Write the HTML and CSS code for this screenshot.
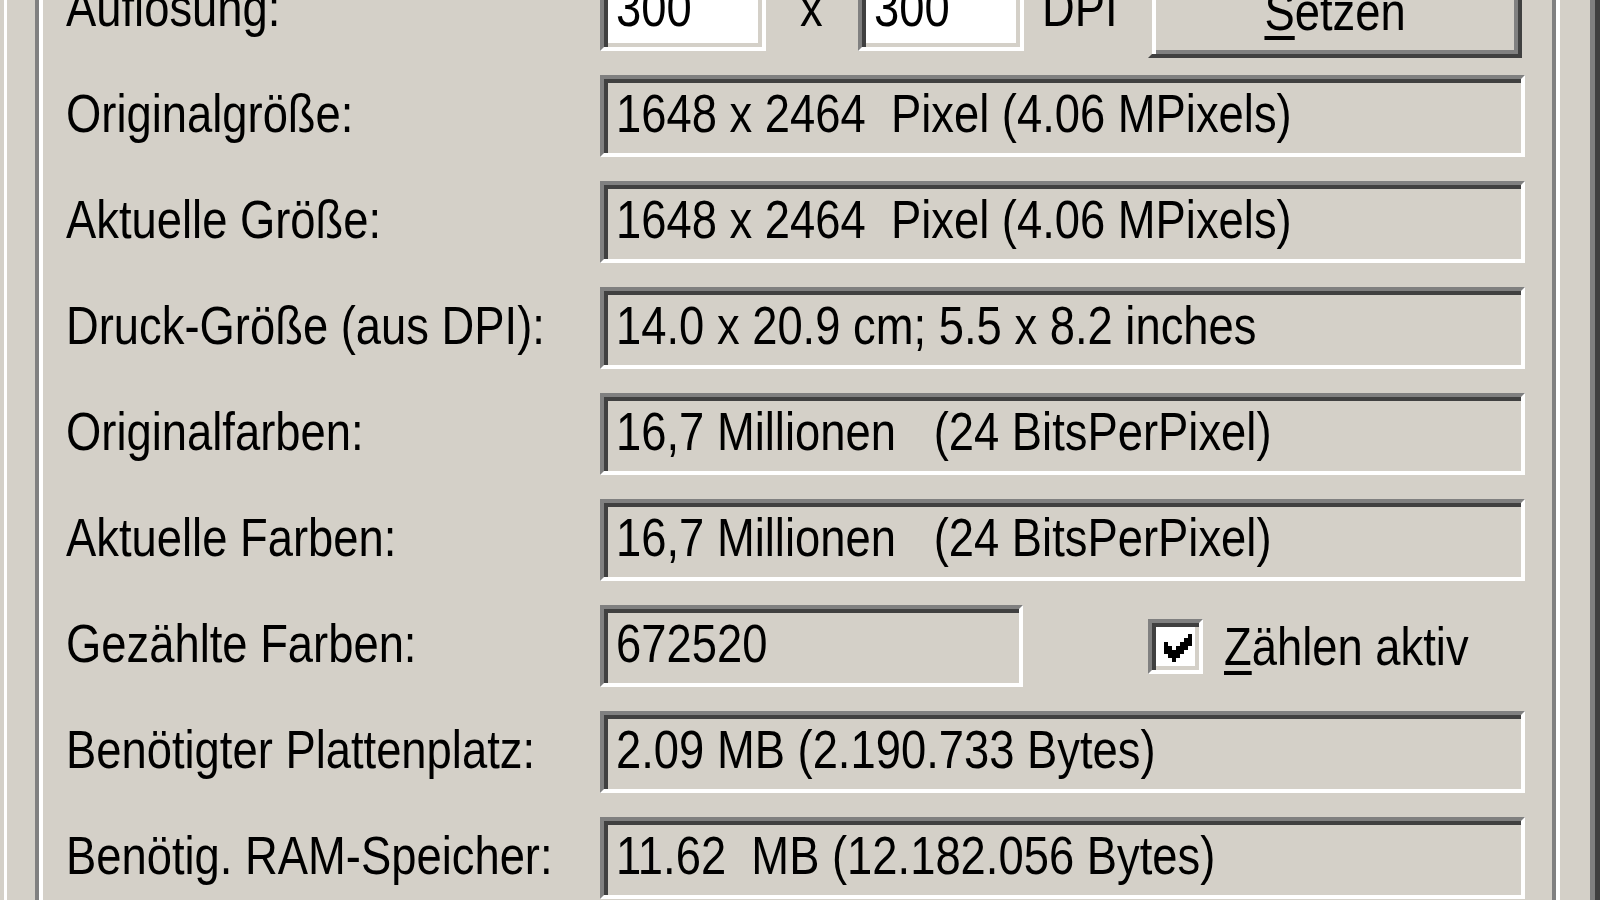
FILE: index.html
```html
<!DOCTYPE html>
<html lang="de">
<head>
<meta charset="UTF-8">
<title>Bildinformation</title>
<link rel="stylesheet" href="styles.css">
</head>
<body>

<div class="window">
    <div class="frame">
        <div class="group">
            <div class="rows">
                <div class="label"><span class="t">Auflösung:</span></div>
                <div class="controls">
                    <div class="edit white small"><span class="t">300</span></div>
                    <span class="times"><span class="t">x</span></span>
                    <div class="edit white small"><span class="t">300</span></div>
                    <span class="unit"><span class="t">DPI</span></span>
                    <div class="button"><span class="t"><u>S</u>etzen</span></div>
                </div>

                <div class="label"><span class="t">Originalgröße:</span></div>
                <div class="edit"><span class="t">1648 x 2464  Pixel (4.06 MPixels)</span></div>

                <div class="label"><span class="t">Aktuelle Größe:</span></div>
                <div class="edit"><span class="t">1648 x 2464  Pixel (4.06 MPixels)</span></div>

                <div class="label"><span class="t">Druck-Größe (aus DPI):</span></div>
                <div class="edit"><span class="t">14.0 x 20.9 cm; 5.5 x 8.2 inches</span></div>

                <div class="label"><span class="t">Originalfarben:</span></div>
                <div class="edit"><span class="t">16,7 Millionen   (24 BitsPerPixel)</span></div>

                <div class="label"><span class="t">Aktuelle Farben:</span></div>
                <div class="edit"><span class="t">16,7 Millionen   (24 BitsPerPixel)</span></div>

                <div class="label"><span class="t">Gezählte Farben:</span></div>
                <div class="controls">
                    <div class="edit count"><span class="t">672520</span></div>
                    <label class="check">
                        <span class="box">
                            <!-- classic 7x7 check glyph -->
                            <svg width="28" height="28" viewBox="0 0 7 7" shape-rendering="crispEdges">
                                <rect x="6" y="0" width="1" height="1"/>
                                <rect x="5" y="1" width="2" height="1"/>
                                <rect x="0" y="2" width="1" height="1"/>
                                <rect x="4" y="2" width="3" height="1"/>
                                <rect x="0" y="3" width="2" height="1"/>
                                <rect x="3" y="3" width="3" height="1"/>
                                <rect x="0" y="4" width="5" height="1"/>
                                <rect x="1" y="5" width="3" height="1"/>
                                <rect x="2" y="6" width="1" height="1"/>
                            </svg>
                        </span>
                        <span class="t"><u>Z</u>ählen aktiv</span>
                    </label>
                </div>

                <div class="label"><span class="t">Benötigter Plattenplatz:</span></div>
                <div class="edit"><span class="t">2.09 MB (2.190.733 Bytes)</span></div>

                <div class="label"><span class="t">Benötig. RAM-Speicher:</span></div>
                <div class="edit"><span class="t">11.62  MB (12.182.056 Bytes)</span></div>
            </div>
        </div>
    </div>
</div>

</body>
</html>
```

FILE: styles.css
```css
/* Windows 2000 style dialog, zoomed in */
html, body {
    margin: 0;
    padding: 0;
    background-color: #d4d0c8;
}
body {
    font-family: "Liberation Sans", Arial, sans-serif;
    font-size: 54px;
    color: #000;
}
/* old bitmap dialog font is narrow, squeeze Arial-width text */
.t {
    display: inline-block;
    white-space: pre;
    margin-bottom: 6px;
    transform: scaleX(0.84);
    transform-origin: left center;
}
.window {
    height: 900px;
    overflow: hidden;
    padding-left: 4px;
    border-right: 5px solid #404040;
}
.frame {
    display: flow-root;
    height: 100%;
    border-left: 3px solid #fff;
    border-right: 5px solid #808080;
}
/* etched group box */
.group {
    margin: -60px 30px 0 28px;
    padding: 29px 31px 40px 27px;
    border-left: 4px solid #808080;
    border-right: 4px solid #fff;
    box-shadow: inset 4px 0 0 #fff, inset -4px 0 0 #808080;
}
.rows {
    display: grid;
    grid-template-columns: 534px minmax(0, 1fr);
    grid-auto-rows: 82px;
    row-gap: 24px;
}
.label {
    display: flex;
    align-items: center;
    white-space: nowrap;
}
.controls {
    display: flex;
    align-items: flex-start;
}
/* sunken edit field */
.edit {
    box-sizing: border-box;
    height: 82px;
    display: flex;
    align-items: center;
    padding-left: 12px;
    white-space: nowrap;
    border: 4px solid;
    border-color: #808080 #fff #fff #808080;
    box-shadow: inset 4px 4px 0 #404040, inset -4px -4px 0 #d4d0c8;
}
.edit.white {
    background-color: #fff;
}
.edit.small {
    flex: 0 0 166px;
}
.times {
    flex: 0 0 58px;
    margin-left: 34px;
    line-height: 76px;
}
.unit {
    flex: 0 0 106px;
    margin-left: 18px;
    line-height: 76px;
}
.button {
    box-sizing: border-box;
    flex: 0 0 374px;
    height: 89px;
    display: flex;
    align-items: center;
    justify-content: center;
    border: 4px solid;
    border-color: #d4d0c8 #404040 #404040 #d4d0c8;
    box-shadow: inset 4px 4px 0 #fff, inset -4px -4px 0 #808080;
}
.button .t {
    transform-origin: center;
}
u {
    text-decoration-thickness: 4px;
    text-underline-offset: 6px;
}
.edit.count {
    flex: 0 0 423px;
}
.check {
    display: flex;
    align-items: center;
    height: 82px;
    margin-left: 125px;
    gap: 21px;
    white-space: nowrap;
}
.check .t {
    margin-bottom: 0;
}
.box {
    box-sizing: border-box;
    flex: 0 0 55px;
    height: 55px;
    display: flex;
    align-items: center;
    justify-content: center;
    padding: 4px 0 0 4px;
    background-color: #fff;
    border: 4px solid;
    border-color: #808080 #fff #fff #808080;
    box-shadow: inset 4px 4px 0 #404040, inset -4px -4px 0 #d4d0c8;
}
```
